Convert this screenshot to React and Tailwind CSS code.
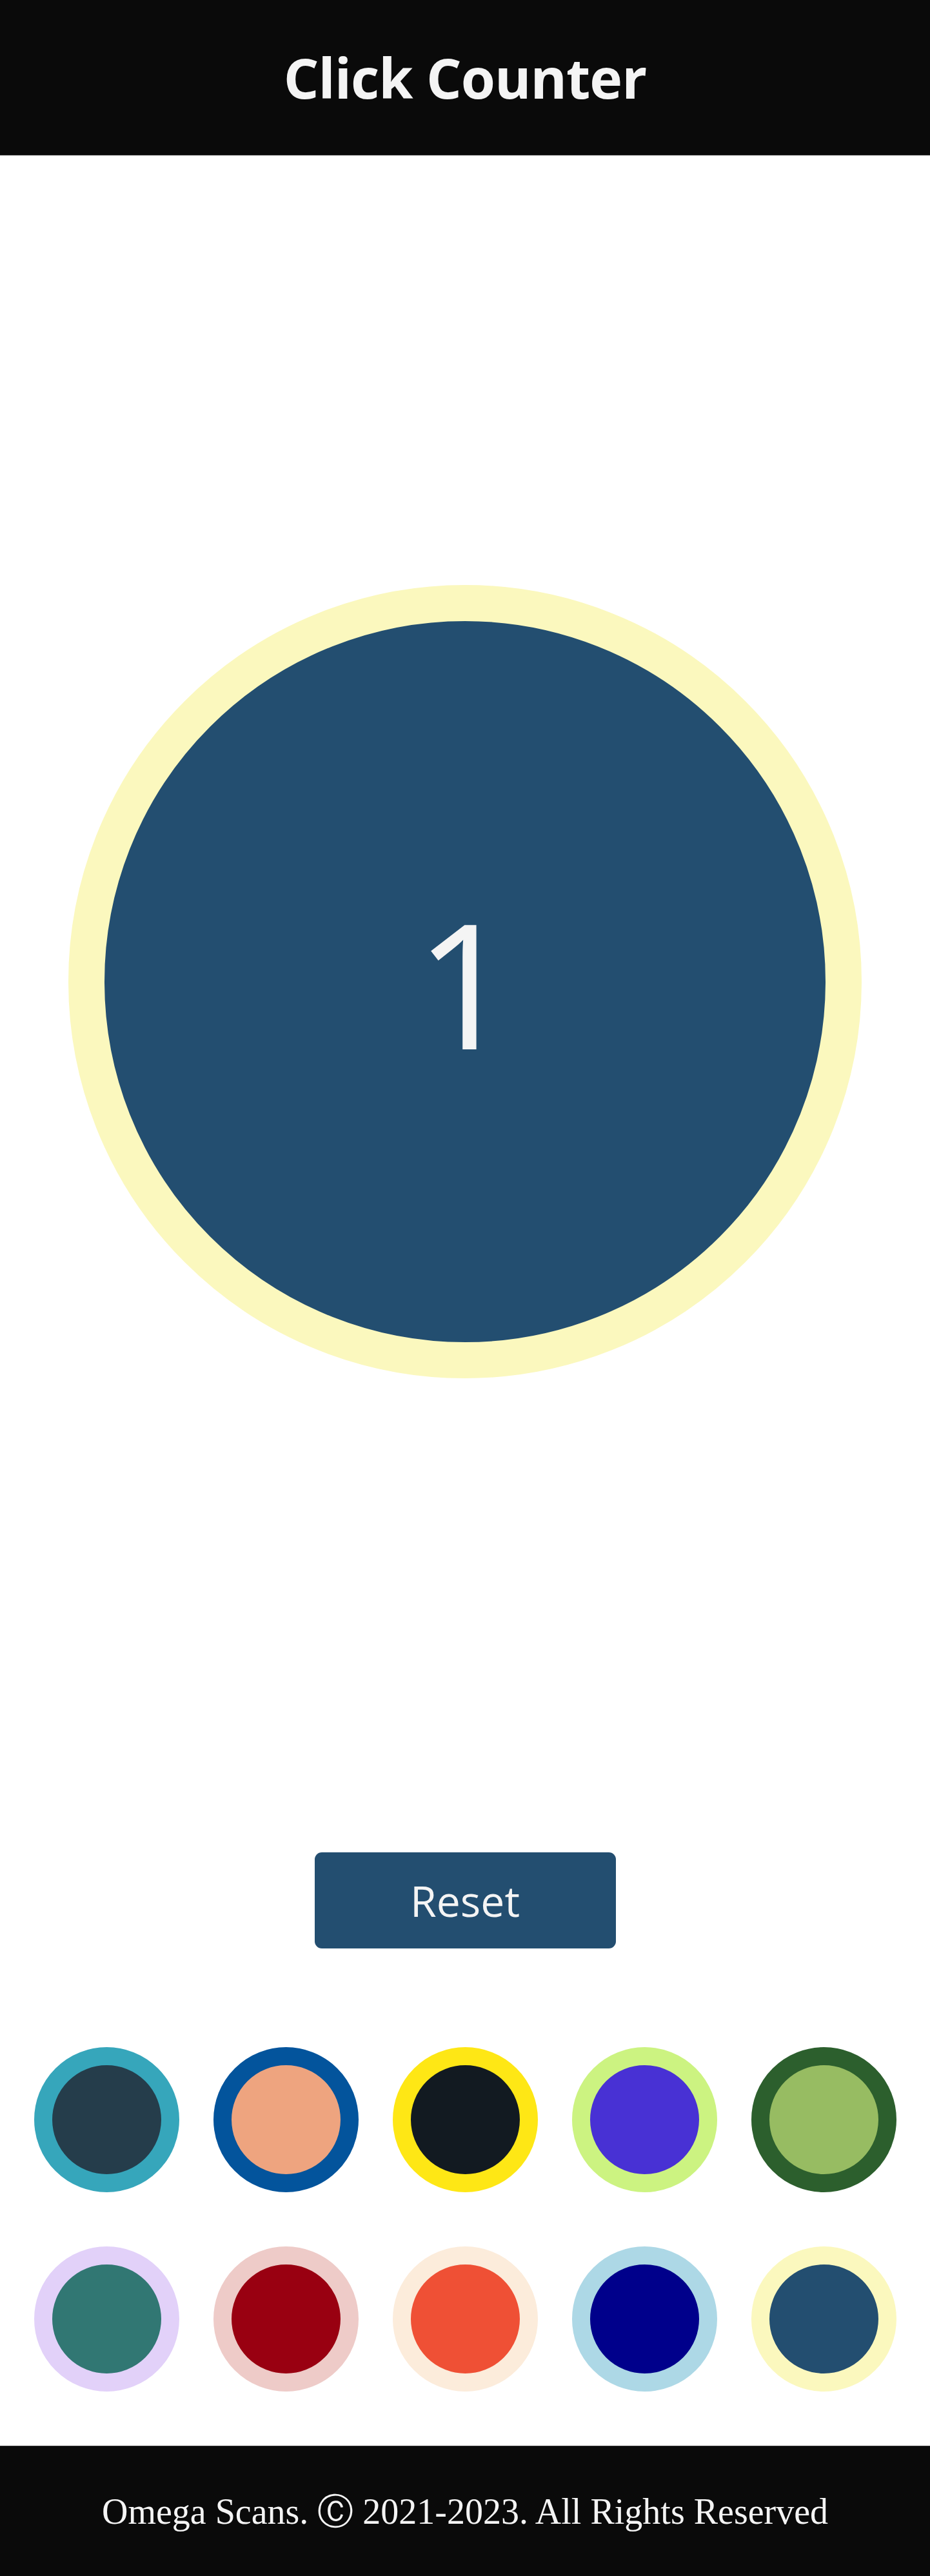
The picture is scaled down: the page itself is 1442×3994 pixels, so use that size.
import React, { useState } from 'react';

const themes = [
  { ring: '#36a6bb', fill: '#253d4b' },
  { ring: '#03549c', fill: '#eea47f' },
  { ring: '#fee715', fill: '#121a21' },
  { ring: '#ccf381', fill: '#4831d4' },
  { ring: '#2c5f2d', fill: '#97bc62' },
  { ring: '#e2d1f9', fill: '#317773' },
  { ring: '#eecbc8', fill: '#990011' },
  { ring: '#fcecdb', fill: '#ef5035' },
  { ring: '#add8e6', fill: '#00008b' },
  { ring: '#fbf8be', fill: '#234e70' },
];

const Swatch = ({ theme, onPick }) => (
  <button
    onClick={onPick}
    className="w-[225px] h-[225px] rounded-full border-[28px] shrink-0 cursor-pointer"
    style={{ borderColor: theme.ring, backgroundColor: theme.fill }}
  />
);

const App = () => {
  const [count, setCount] = useState(1);
  const [theme, setTheme] = useState(themes[9]);

  return (
    <div className="min-h-screen flex flex-col bg-white" style={{ fontFamily: '"Open Sans", sans-serif' }}>
      <header className="h-[241px] bg-[#0a0a0a] border-b border-[#333] flex items-center justify-center">
        <h1 className="text-[86px] font-bold text-[#f4f4f4] leading-none tracking-[-1px]">Click Counter</h1>
      </header>

      <main className="flex flex-col items-center">
        <button
          onClick={() => setCount(count + 1)}
          className="mt-[666px] w-[1230px] h-[1230px] rounded-full border-[56px] flex items-center justify-center cursor-pointer"
          style={{ borderColor: theme.ring, backgroundColor: theme.fill }}
        >
          <span className="text-[270px] leading-none text-[#f4f4f4]">{count}</span>
        </button>

        <button
          onClick={() => setCount(0)}
          className="mt-[735px] w-[467px] h-[149px] rounded-[11px] text-[66px] text-[#f4f4f4] cursor-pointer"
          style={{ backgroundColor: theme.fill }}
        >
          Reset
        </button>

        <div className="mt-[153px] mb-[84px] flex flex-col gap-[84px]">
          <div className="flex justify-center gap-[53px]">
            {themes.slice(0, 5).map((t, i) => (
              <Swatch key={i} theme={t} onPick={() => setTheme(t)} />
            ))}
          </div>
          <div className="flex justify-center gap-[53px]">
            {themes.slice(5).map((t, i) => (
              <Swatch key={i} theme={t} onPick={() => setTheme(t)} />
            ))}
          </div>
        </div>
      </main>

      <footer className="h-[203px] bg-[#0a0a0a] border-t border-[#333] flex items-center justify-center">
        <p className="text-[56px] text-[#f4f4f4] leading-none" style={{ fontFamily: '"Liberation Serif", "DejaVu Sans", serif' }}>
          Omega Scans. Ⓒ 2021-2023. All Rights Reserved
        </p>
      </footer>
    </div>
  );
};

export default App;
